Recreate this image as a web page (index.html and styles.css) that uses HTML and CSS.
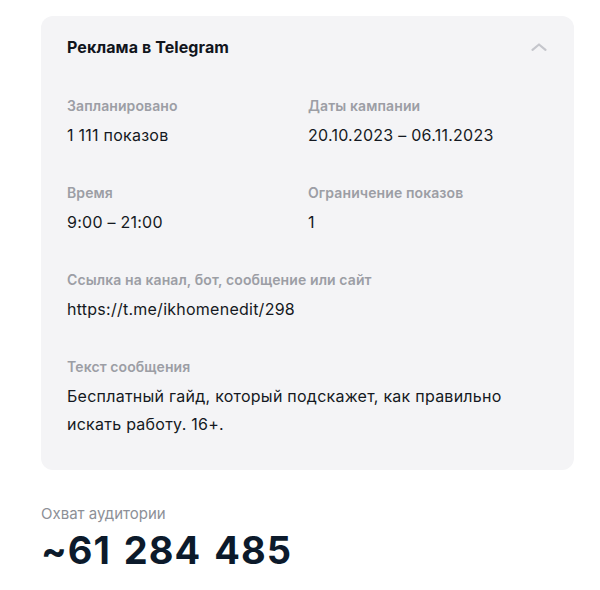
FILE: index.html
```html
<!DOCTYPE html>
<html lang="ru">
<head>
<meta charset="utf-8">
<link rel="stylesheet" href="styles.css">
</head>
<body>
<div class="page">
  <section class="card">
    <div class="card-head">
      <h2 class="card-title">Реклама в Telegram</h2>
      <svg class="chevron" width="16" height="8" viewBox="0 0 16 8"><path d="M1.5 6.8 L8 1.5 L14.5 6.8" fill="none" stroke="#c5c6cc" stroke-width="2.2" stroke-linecap="round" stroke-linejoin="round"/></svg>
    </div>
    <div class="grid">
      <div class="field">
        <div class="label">Запланировано</div>
        <div class="value">1 111 показов</div>
      </div>
      <div class="field">
        <div class="label">Даты кампании</div>
        <div class="value">20.10.2023 – 06.11.2023</div>
      </div>
      <div class="field">
        <div class="label">Время</div>
        <div class="value">9:00 – 21:00</div>
      </div>
      <div class="field">
        <div class="label">Ограничение показов</div>
        <div class="value">1</div>
      </div>
      <div class="field wide">
        <div class="label">Ссылка на канал, бот, сообщение или сайт</div>
        <div class="value">https://t.me/ikhomenedit/298</div>
      </div>
      <div class="field wide">
        <div class="label">Текст сообщения</div>
        <div class="value text">Бесплатный гайд, который подскажет, как правильно<br>искать работу. 16+.</div>
      </div>
    </div>
  </section>
  <div class="reach">
    <div class="reach-label">Охват аудитории</div>
    <div class="reach-value">~61 284 485</div>
  </div>
</div>
</body>
</html>
```
FILE: styles.css
```css
* { box-sizing: border-box; }
html, body { margin: 0; padding: 0; background: #ffffff; }
body {
  font-family: Inter, "Noto Sans", "Liberation Sans", sans-serif;
  color: #141922;
}
.page {
  padding: 16px 26px 0 41px;
}
.card {
  background: #f4f4f6;
  border-radius: 12px;
  padding: 21px 26px 32px 26px;
}
.card-head {
  display: flex;
  align-items: center;
  justify-content: space-between;
  height: 20px;
}
.card-title {
  margin: 0;
  font-size: 16px;
  line-height: 20px;
  font-weight: 700;
  color: #11151c;
  letter-spacing: 0.1px;
}
.chevron {
  margin-right: 1px;
  display: block;
}
.grid {
  display: grid;
  grid-template-columns: 241px 1fr;
  row-gap: 38px;
  margin-top: 40px;
}
.field.wide { grid-column: 1 / -1; }
.label {
  font-size: 14px;
  line-height: 18px;
  font-weight: 600;
  color: #9c9ea5;
  letter-spacing: 0.1px;
}
.value {
  margin-top: 9px;
  font-size: 16px;
  line-height: 22px;
  color: #141922;
  letter-spacing: 0.25px;
}
.value.text {
  margin-top: 6px;
  line-height: 28px;
}
.reach {
  margin-top: 35px;
}
.reach-label {
  font-size: 15px;
  line-height: 18px;
  color: #8d9097;
}
.reach-value {
  margin-top: 6px;
  font-size: 38px;
  line-height: 42px;
  font-weight: 700;
  color: #0c1a2b;
  letter-spacing: 1px;
  word-spacing: 3px;
}
```
